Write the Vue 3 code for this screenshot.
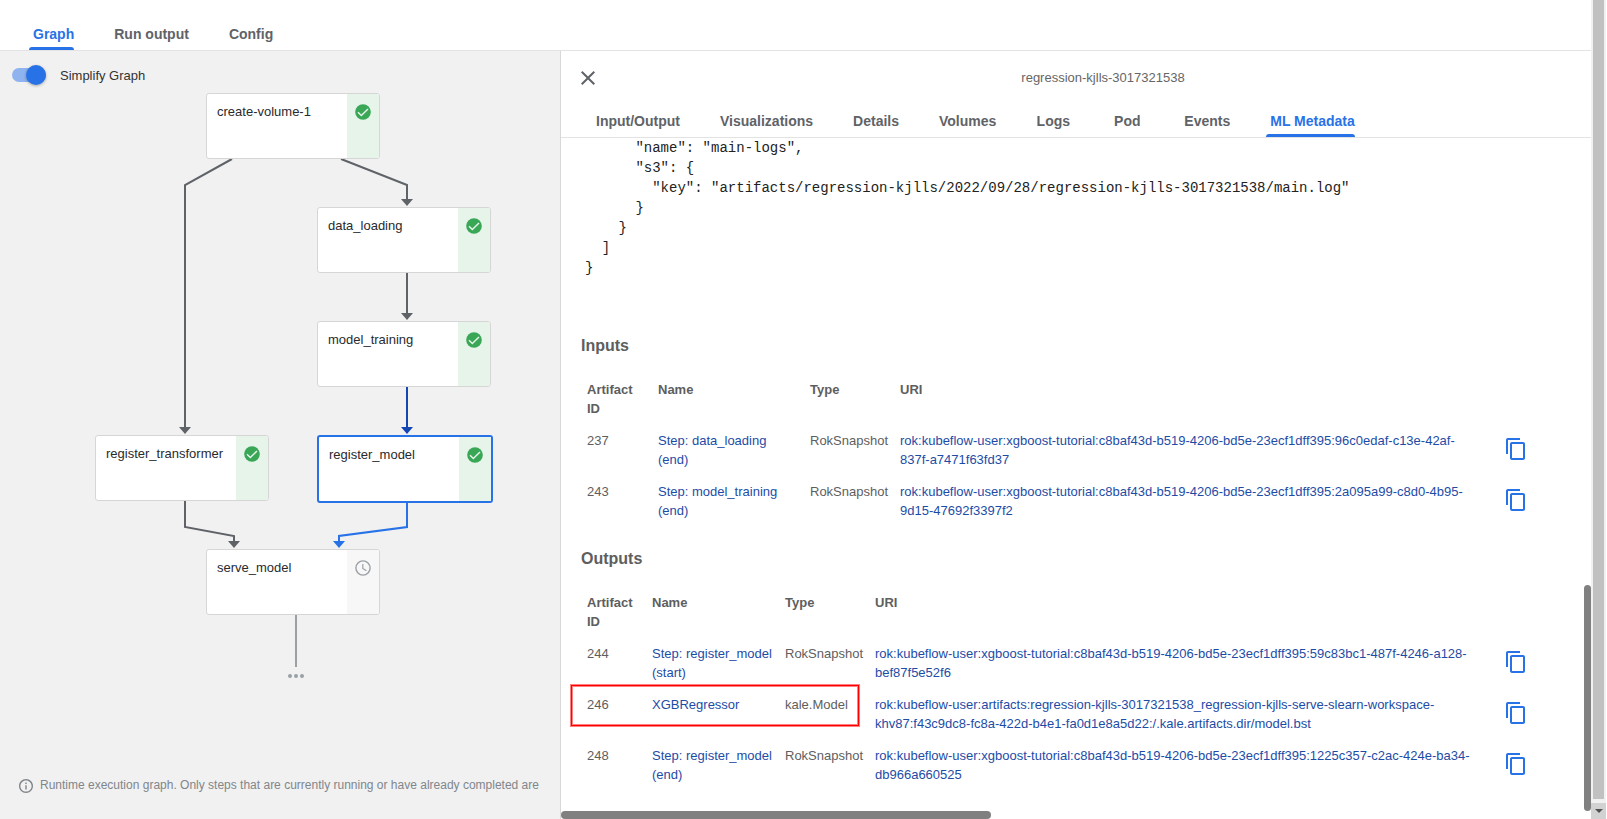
<script setup>
import { ref } from 'vue'

const simplify = ref(true)
const pageTab = ref('Graph')
const pageTabs = ['Graph', 'Run output', 'Config']
const detailTab = ref('ML Metadata')
const detailTabs = [
  'Input/Output', 'Visualizations', 'Details', 'Volumes',
  'Logs', 'Pod', 'Events', 'ML Metadata',
]

const selected = ref('register_model')
const nodes = [
  { name: 'create-volume-1', x: 206, y: 42, done: true },
  { name: 'data_loading', x: 317, y: 156, done: true },
  { name: 'model_training', x: 317, y: 270, done: true },
  { name: 'register_transformer', x: 95, y: 384, done: true },
  { name: 'register_model', x: 317, y: 384, done: true },
  { name: 'serve_model', x: 206, y: 498, done: false },
]

const edges = [
  { kind: 'plain', points: '232,108 185,134 185,378', tip: [185, 376] },
  { kind: 'plain', points: '341,108 407,134 407,150', tip: [407, 148] },
  { kind: 'plain', points: '407,222 407,264', tip: [407, 262] },
  { kind: 'into', points: '407,336 407,378', tip: [407, 376] },
  { kind: 'plain', points: '185,450 185,476 234,485 234,492', tip: [234, 490] },
  { kind: 'from', points: '407,450 407,476 339,485 339,492', tip: [339, 490] },
  { kind: 'muted', points: '296,564 296,616', tip: null },
]

const code = [
  '      "name": "main-logs",',
  '      "s3": {',
  '        "key": "artifacts/regression-kjlls/2022/09/28/regression-kjlls-3017321538/main.log"',
  '      }',
  '    }',
  '  ]',
  '}',
].join('\n')

const sections = [
  {
    title: 'Inputs',
    kind: 'inputs',
    rows: [
      { id: 237, name: 'Step: data_loading (end)', type: 'RokSnapshot', uri: 'rok:kubeflow-user:xgboost-tutorial:c8baf43d-b519-4206-bd5e-23ecf1dff395:96c0edaf-c13e-42af-837f-a7471f63fd37' },
      { id: 243, name: 'Step: model_training (end)', type: 'RokSnapshot', uri: 'rok:kubeflow-user:xgboost-tutorial:c8baf43d-b519-4206-bd5e-23ecf1dff395:2a095a99-c8d0-4b95-9d15-47692f3397f2' },
    ],
  },
  {
    title: 'Outputs',
    kind: 'outputs',
    rows: [
      { id: 244, name: 'Step: register_model (start)', type: 'RokSnapshot', uri: 'rok:kubeflow-user:xgboost-tutorial:c8baf43d-b519-4206-bd5e-23ecf1dff395:59c83bc1-487f-4246-a128-bef87f5e52f6' },
      { id: 246, name: 'XGBRegressor', type: 'kale.Model', marked: true, uri: 'rok:kubeflow-user:artifacts:regression-kjlls-3017321538_regression-kjlls-serve-slearn-workspace-khv87:f43c9dc8-fc8a-422d-b4e1-fa0d1e8a5d22:/.kale.artifacts.dir/model.bst' },
      { id: 248, name: 'Step: register_model (end)', type: 'RokSnapshot', uri: 'rok:kubeflow-user:xgboost-tutorial:c8baf43d-b519-4206-bd5e-23ecf1dff395:1225c357-c2ac-424e-ba34-db966a660525' },
    ],
  },
]
</script>

<template>
  <div class="page">
    <div class="app">
      <nav class="tabs page-tabs">
        <button
          v-for="t in pageTabs" :key="t" type="button"
          class="tab" :class="{ active: t === pageTab }" @click="pageTab = t"
        >{{ t }}</button>
      </nav>

      <main class="split">
        <section class="graph">
          <div class="canvas">
            <svg class="edges" aria-hidden="true">
              <g v-for="(e, i) in edges" :key="i" :class="['edge', e.kind]">
                <polyline :points="e.points" />
                <path v-if="e.tip" :d="`M${e.tip[0] - 6} ${e.tip[1]}h12l-6 7z`" />
              </g>
              <g class="more">
                <circle cx="290" cy="625" r="2" />
                <circle cx="296" cy="625" r="2" />
                <circle cx="302" cy="625" r="2" />
              </g>
            </svg>
            <button
              v-for="n in nodes" :key="n.name" type="button"
              class="node" :class="{ selected: n.name === selected }"
              :style="{ left: n.x + 'px', top: n.y + 'px' }"
              @click="selected = n.name"
            >
              <span class="node-name">{{ n.name }}</span>
              <span class="node-status" :class="{ done: n.done }">
                <svg v-if="n.done" width="16" height="16" viewBox="0 0 16 16">
                  <circle cx="8" cy="8" r="7.8" fill="#3aa757" />
                  <path d="M3 8.3l3.3 3.2L13 5" fill="none" stroke="#e6f4ea" stroke-width="1.5" />
                </svg>
                <svg v-else width="16" height="16" viewBox="0 0 16 16" fill="none" stroke="#9aa0a6">
                  <circle cx="8" cy="8" r="7.1" stroke-width="1.4" />
                  <path d="M7.8 4v4.4l3.6 2.3" stroke-width="1.2" />
                </svg>
              </span>
            </button>
          </div>

          <label class="switch">
            <input v-model="simplify" type="checkbox">
            <span>Simplify Graph</span>
          </label>

          <p class="hint">
            <svg width="14" height="14" viewBox="2 2 20 20" fill="#80868b">
              <path d="M11 7h2v2h-2zm0 4h2v6h-2zm1-9C6.48 2 2 6.48 2 12s4.48 10 10 10 10-4.48 10-10S17.52 2 12 2zm0 18c-4.41 0-8-3.59-8-8s3.59-8 8-8 8 3.59 8 8-3.59 8-8 8z" />
            </svg>
            <span>Runtime execution graph. Only steps that are currently running or have already completed are</span>
          </p>
        </section>

        <section class="panel">
          <header class="panel-head">
            <button type="button" class="close" aria-label="close">
              <svg width="14" height="14" viewBox="5 5 14 14" fill="#5f6368">
                <path d="M19 6.41L17.59 5 12 10.59 6.41 5 5 6.41 10.59 12 5 17.59 6.41 19 12 13.41 17.59 19 19 17.59 13.41 12z" />
              </svg>
            </button>
            <span class="panel-title">regression-kjlls-3017321538</span>
          </header>

          <nav class="tabs">
            <button
              v-for="t in detailTabs" :key="t" type="button"
              class="tab" :class="{ active: t === detailTab }" @click="detailTab = t"
            >{{ t }}</button>
          </nav>

          <div class="panel-body">
            <pre class="code">{{ code }}</pre>

            <section v-for="s in sections" :key="s.kind" class="artifacts" :class="s.kind">
              <h2>{{ s.title }}</h2>
              <table>
                <colgroup>
                  <col class="c-id"><col class="c-name"><col class="c-type"><col><col class="c-copy">
                </colgroup>
                <thead>
                  <tr>
                    <th>Artifact ID</th><th>Name</th><th>Type</th><th>URI</th><td></td>
                  </tr>
                </thead>
                <tbody>
                  <tr v-for="r in s.rows" :key="r.id">
                    <td class="id">{{ r.id }}<span v-if="r.marked" class="mark"></span></td>
                    <td><a href="#">{{ r.name }}</a></td>
                    <td>{{ r.type }}</td>
                    <td><a href="#">{{ r.uri }}</a></td>
                    <td class="copy-cell">
                      <button type="button" class="copy" aria-label="Copy URI">
                        <svg width="24" height="24" viewBox="0 0 24 24" fill="#2872e8">
                          <path d="M16 1H4c-1.1 0-2 .9-2 2v14h2V3h12V1zm3 4H8c-1.1 0-2 .9-2 2v14c0 1.1.9 2 2 2h11c1.1 0 2-.9 2-2V7c0-1.1-.9-2-2-2zm0 16H8V7h11v14z" />
                        </svg>
                      </button>
                    </td>
                  </tr>
                </tbody>
              </table>
            </section>
          </div>

          <div class="thumb-v"></div>
          <div class="thumb-h"></div>
        </section>
      </main>
    </div>

    <div class="page-scroll" aria-hidden="true">
      <div class="page-thumb"></div>
      <div class="page-arrow">
        <svg width="8" height="4" viewBox="0 0 8 4"><path d="M0 0h8L4 4z" fill="#505050" /></svg>
      </div>
    </div>
  </div>
</template>

<style>
body {
  margin: 0;
  background: #fff;
}
</style>

<style scoped>
* {
  box-sizing: border-box;
}
.page {
  display: flex;
  height: 100vh;
  overflow: hidden;
  padding-right: 1px;
  font: 13px/19px "Liberation Sans", Arial, sans-serif;
  color: #5f6368;
}
button {
  font: inherit;
  color: inherit;
  background: none;
  border: 0;
  padding: 0;
  cursor: pointer;
}
.app {
  flex: 1;
  min-width: 0;
  display: flex;
  flex-direction: column;
}
.tabs {
  display: flex;
  flex: none;
  padding-left: 15px;
  border-bottom: 1px solid #e3e3e3;
}
.page-tabs {
  padding: 18px 0 0 13px;
}
.tab {
  position: relative;
  height: 32px;
  min-width: 74px;
  padding: 0 20px;
  font-size: 14px;
  font-weight: bold;
  color: #5f6368;
  white-space: nowrap;
}
.tab.active {
  color: #2872e8;
}
.tab.active::after {
  content: "";
  position: absolute;
  left: 16px;
  right: 20px;
  bottom: 0;
  height: 3px;
  border-radius: 3px 3px 0 0;
  background: #2872e8;
}
.split {
  flex: 1;
  min-height: 0;
  display: grid;
  grid-template-columns: minmax(0, 560fr) minmax(0, 1031fr);
  grid-template-rows: minmax(0, 1fr);
}

/* graph pane */
.graph {
  position: relative;
  display: flex;
  flex-direction: column;
  overflow: hidden;
  background: #f1f1f1;
}
.canvas {
  position: absolute;
  inset: 0;
}
.edges {
  position: absolute;
  width: 100%;
  height: 100%;
}
.edge polyline {
  fill: none;
  stroke: currentColor;
  stroke-width: 2;
}
.edge path,
.more {
  fill: currentColor;
}
.plain { color: #5f6368; }
.into { color: #1446b4; }
.from { color: #2872e8; }
.muted, .more { color: #9aa0a6; }
.node {
  position: absolute;
  display: flex;
  align-items: stretch;
  box-sizing: content-box;
  width: 172px;
  height: 64px;
  border: 1px solid #d6d6d6;
  border-radius: 3px;
  background: #fff;
  color: #292a2d;
  text-align: left;
  overflow: hidden;
}
.node.selected {
  border: 2px solid #2872e8;
}
.node-name {
  flex: 1;
  padding: 8px 0 0 10px;
}
.node-status {
  width: 32px;
  padding-top: 10px;
  background: #f7f7f7;
  text-align: center;
}
.node-status.done {
  background: #e6f4ea;
}
.node-status svg {
  display: block;
  margin: 0 auto;
}
.switch {
  position: relative;
  align-self: flex-start;
  display: flex;
  align-items: center;
  gap: 14px;
  padding: 14px 0 0 12px;
  color: #333;
}
.switch input {
  appearance: none;
  position: relative;
  width: 34px;
  height: 20px;
  margin: 0;
}
.switch input::before {
  content: "";
  position: absolute;
  inset: 3px 0;
  border-radius: 7px;
  background: #bdbdbd;
}
.switch input::after {
  content: "";
  position: absolute;
  left: 0;
  width: 20px;
  height: 20px;
  border-radius: 50%;
  background: #fafafa;
  box-shadow: 0 1px 3px rgba(0, 0, 0, 0.3);
}
.switch input:checked::before {
  background: #8fb3ef;
}
.switch input:checked::after {
  left: 14px;
  background: #2872e8;
}
.hint {
  position: relative;
  display: flex;
  align-items: center;
  gap: 7px;
  margin: auto 0 24px 19px;
  font-size: 12px;
  color: #80868b;
  white-space: nowrap;
}
.hint svg {
  flex: none;
}

/* details panel */
.panel {
  position: relative;
  display: flex;
  flex-direction: column;
  min-width: 0;
  border-left: 1px solid #d8d8d8;
  background: #fff;
}
.panel-head {
  flex: none;
  display: flex;
  align-items: center;
  height: 54px;
}
.close {
  width: 54px;
  height: 54px;
}
.close svg {
  display: block;
  margin: 0 auto;
}
.panel-title {
  flex: 1;
  padding-bottom: 2px;
  text-align: center;
  color: #666;
}
.panel-body {
  flex: 1;
  min-height: 0;
  overflow: hidden;
  padding: 0 54px 0 20px;
}
.code {
  margin: 0 0 58px;
  padding-left: 4px;
  font: 14px/20px "Liberation Mono", "Courier New", monospace;
  color: #222;
}
.artifacts {
  margin-bottom: 22px;
  color: #5e5e5e;
}
h2 {
  margin: 0 0 18px;
  font-size: 16px;
  line-height: 20px;
}
table {
  width: 100%;
  table-layout: fixed;
  border-collapse: collapse;
}
.c-id { width: 71px; }
.c-name { width: 152px; }
.c-type { width: 90px; }
.c-copy { width: 53px; }
.outputs .c-id { width: 65px; }
.outputs .c-name { width: 133px; }
th, td {
  padding: 6px 6px 7px;
  text-align: left;
  vertical-align: top;
}
td:nth-child(3) {
  white-space: nowrap;
}
a {
  color: #1d4ca6;
  text-decoration: none;
}
.id {
  position: relative;
}
.mark {
  position: absolute;
  left: -10px;
  top: -4px;
  width: 288px;
  height: 41px;
  border: 1px solid #f00;
  box-shadow: 0 0 0 1px rgba(255, 0, 0, 0.5), inset 0 0 0 1px rgba(255, 0, 0, 0.5);
  pointer-events: none;
}
.copy-cell {
  padding: 12px 0 0 20px;
}
.copy, .copy svg {
  display: block;
}

/* scroll indicators */
.thumb-v, .thumb-h {
  position: absolute;
  border-radius: 4px;
  background: #808080;
}
.thumb-v {
  right: 0;
  bottom: 8px;
  width: 7px;
  height: 226px;
}
.thumb-h {
  left: 0;
  bottom: 0;
  width: 430px;
  height: 8px;
}
.page-scroll {
  flex: none;
  display: flex;
  flex-direction: column;
  gap: 4px;
  width: 15px;
  background: #f1f1f1;
}
.page-thumb {
  flex: 1;
  margin: 0 2px;
  background: #c1c1c1;
}
.page-arrow {
  display: flex;
  align-items: center;
  justify-content: center;
  height: 16px;
  background: #d2d2d2;
}
</style>
